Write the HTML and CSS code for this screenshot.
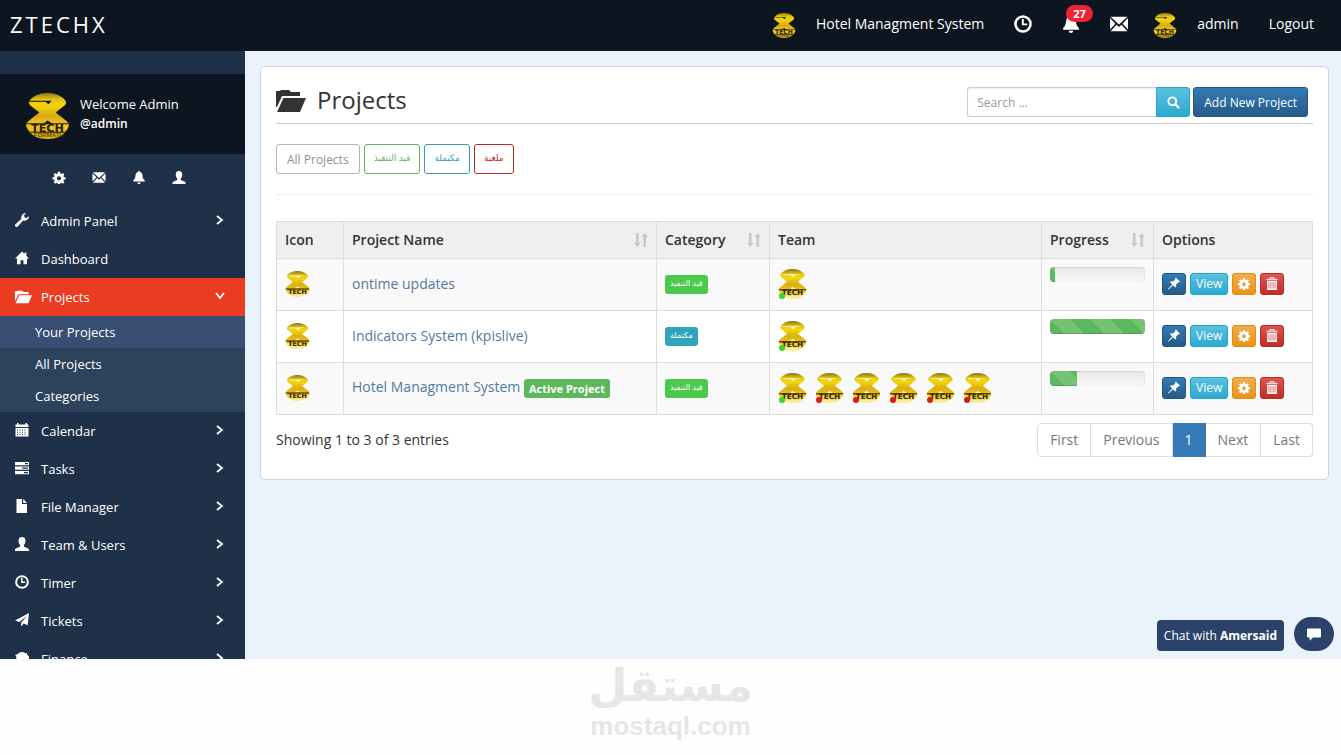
FILE: index.html
```html
<!DOCTYPE html>
<html lang="en">
<head>
  <meta charset="UTF-8">
  <meta name="viewport" content="width=device-width, initial-scale=1.0">
  <title>Projects - ZTECHX</title>
  <link rel="stylesheet" href="styles.css">
</head>
<body>
  <!-- icons -->
  <svg class="sprite" aria-hidden="true">
    <defs>
      <linearGradient id="gold" x1="0" y1="0" x2="0" y2="1">
        <stop offset="0" stop-color="#8d7a12"/>
        <stop offset=".14" stop-color="#e3c414"/>
        <stop offset=".28" stop-color="#f2d40a"/>
        <stop offset=".5" stop-color="#d9a916"/>
        <stop offset=".7" stop-color="#f0c81c"/>
        <stop offset="1" stop-color="#d8b018"/>
      </linearGradient>
      <linearGradient id="gold-light" x1="0" y1="0" x2="0" y2="1">
        <stop offset="0" stop-color="#85751b"/>
        <stop offset=".15" stop-color="#dcbc0c"/>
        <stop offset=".28" stop-color="#f4da06"/>
        <stop offset=".5" stop-color="#dcae14"/>
        <stop offset=".72" stop-color="#efc60e"/>
        <stop offset=".84" stop-color="#f3d650"/>
        <stop offset="1" stop-color="#fbe98e"/>
      </linearGradient>
      <clipPath id="glass"><path d="M3 8Q9 0 21 0T39 8Q40 10 38 12L29 19L39 27Q42 29 42 32Q37 45 21 45T0 32Q0 29 3 27L13 19L4 12Q2 10 3 8Z"/></clipPath>
    </defs>
    <symbol id="logo" viewBox="0 0 42 45">
      <g clip-path="url(#glass)">
        <path fill="url(#gold)" d="M0 0h42v45H0z"/>
        <path fill="#0d1520" d="M3 7.500h22l-3 3.500-3-2.500H3zM17 30l4-3 5 3z"/>
        <path fill="#1c1a10" d="M0 29.500h42v1H0zM0 38h42v1H0z"/>
      </g>
      <text x="21" y="38" class="logo-word" fill="#2c1d08">TECH</text>
      <text x="21" y="43.500" class="logo-sub" fill="#5d4a08">FORMATI</text>
    </symbol>
    <symbol id="logo-light" viewBox="0 0 42 45">
      <g clip-path="url(#glass)">
        <path fill="url(#gold-light)" d="M0 0h42v45H0z"/>
        <path fill="#fff9dc" d="M6 8h29l-10 1.500-3 3-4-3L6 9zM17 30l4-3 5 3z"/>
        <path fill="#2d220a" d="M0 30.500h42v1.500H0z"/>
        <path stroke="#fff3b8" stroke-width="1" d="M8 41h26M14 43h14"/>
      </g>
      <text x="21" y="39" class="logo-word" fill="#2d220a">TECH</text>
    </symbol>
    <symbol id="cog" viewBox="0 0 16 16">
      <path fill-rule="evenodd" d="M6.700 1h2.600l.4 2 1.300.6 1.800-1.200 1.800 1.800-1.200 1.800.6 1.300 2 .4v2.600l-2 .4-.6 1.300 1.200 1.800-1.800 1.800-1.800-1.200-1.300.6-.4 2H6.700l-.4-2-1.300-.6-1.800 1.200-1.800-1.800L2.600 12 2 10.700l-2-.4V7.700l2-.4L2.600 6 1.400 4.200l1.800-1.800L5 3.600 6.300 3zM8 6.400a2.600 2.600 0 1 0 0 5.200 2.600 2.600 0 0 0 0-5.200z"/>
    </symbol>
    <symbol id="mail" viewBox="0 0 16 16">
      <path d="M.5 1.500h15L8 8.500zM0 2.700l4.800 5L0 12.800zM16 2.700l-4.800 5 4.800 5.100zM.6 14.500l5.200-5.800L8 10.700l2.200-2 5.200 5.800z"/>
    </symbol>
    <symbol id="bell" viewBox="0 0 16 16">
      <path d="M8 0c.8 0 1.300.5 1.300 1.300C11.500 2 12.200 4 12.400 6c.2 2.600 1 4 2.600 5.500V13H1v-1.500C2.600 10 3.400 8.600 3.600 6c.2-2 .9-4 3.100-4.700C6.700.5 7.200 0 8 0zM6 14h4c-.2 1.300-1 2-2 2s-1.800-.7-2-2z"/>
    </symbol>
    <symbol id="user" viewBox="0 0 16 16">
      <path d="M8 0c2.600 0 4 1.700 4 4.200 0 2-.7 3.800-1.900 4.900v1.300c0 .5.300.8.800 1l3.600 1.500c1 .4 1.500 1 1.500 2V16H0v-1.100c0-1 .5-1.600 1.500-2l3.600-1.500c.5-.2.8-.5.8-1V9.100C4.700 8 4 6.200 4 4.200 4 1.700 5.400 0 8 0z"/>
    </symbol>
    <symbol id="clock" viewBox="0 0 16 16">
      <circle cx="8" cy="8" r="6.700" fill="none" stroke="currentColor" stroke-width="2.300"/>
      <path d="M7 3.500h1.700v4h3.100v1.700H7z"/>
    </symbol>
    <symbol id="wrench" viewBox="0 0 16 16">
      <path d="M15.700 3.300a4.700 4.700 0 0 1-6.200 5.200L3 15.300a1.700 1.700 0 0 1-2.500-2.400L7.400 6.500A4.700 4.700 0 0 1 12.700.3L10.400 2.700l.6 2.300 2.300.6z"/>
    </symbol>
    <symbol id="home" viewBox="0 0 16 16">
      <path d="M8 .5l3 3V1.800h2v3.700L16 8.700H13.700V15H9.700v-4.500H6.300V15H2.300V8.700H0z"/>
    </symbol>
    <symbol id="folder" viewBox="0 0 30 22">
      <path d="M0 1h4l1-1h8l2 2h9v4H6L1 17H0zM7.500 8H30L24 22H1z"/>
    </symbol>
    <symbol id="calendar" viewBox="0 0 14 14">
      <path d="M2 0h1.500v1.500h7V0H12v1.500h1.500V4H.5V1.500H2z"/>
      <path fill-rule="evenodd" d="M.5 5h13v8.500H.5zM2 6.500v1h1v-1zm2.500 0v1h1v-1zm2.500 0v1h1v-1zm2.500 0v1h1v-1zM2 8.800v1h1v-1zm2.500 0v1h1v-1zm2.500 0v1h1v-1zm2.500 0v1h1v-1zM2 11v1h1v-1zm2.500 0v1h1v-1zM7 11v1h1v-1zm2.500 0v1h1v-1z"/>
    </symbol>
    <symbol id="tasks" viewBox="0 0 14 14">
      <path fill-rule="evenodd" d="M0 1h14v3.300H0zm10 1v1.300h3V2zM0 5.500h14v3.300H0zm7 1v1.300h6V6.500zM0 10h14v3.300H0zm9 1v1.300h4V11z"/>
    </symbol>
    <symbol id="file" viewBox="0 0 14 14">
      <path d="M1.500 0H7v5h5v9H1.500zM8.200 0L12 3.900H8.200z"/>
    </symbol>
    <symbol id="plane" viewBox="0 0 16 16">
      <path d="M16 0l-1.500 14-4.500-2-3 3.500v-4.300L13.500 3.500 5 10.200 0 8.500z"/>
    </symbol>
    <symbol id="piggy" viewBox="0 0 16 16">
      <path d="M5 2q3-2 6 0l1 .8 2-.8-.3 2.200L16 6v4l-2.500 1.500L12 15h-2v-2H6v2H4l-1-3.500Q1 9 1.500 6L0 4.500 2 4z"/>
    </symbol>
    <symbol id="search" viewBox="0 0 16 16">
      <circle cx="6.500" cy="6.500" r="4.800" fill="none" stroke="currentColor" stroke-width="2.400"/>
      <path d="M9 11l2-2 4.500 4.300q.4 1.200-.7 2-1 .5-1.700-.2z"/>
    </symbol>
    <symbol id="pin" viewBox="0 0 16 16">
      <path d="M9.500.8l1-.8L16 5.500l-1 1-1.300-.2-2.900 2.900.2 2.800-1.300 1.300-3-3L.8 16 0 15.200l5.700-5.900-3-3L4 5l2.800.2 2.900-2.900z"/>
    </symbol>
    <symbol id="trash" viewBox="0 0 14 16">
      <path fill-rule="evenodd" d="M4.500 0h5l.6 2H14v1.500H0V2h3.900zm.9 1l-.3 1h3.800l-.3-1zM1 4.500h12V16H1zM2.800 6v8h.9V6zm2.500 0v8h.9V6zm2.500 0v8h.9V6zm2.500 0v8h.9V6z"/>
    </symbol>
    <symbol id="chat" viewBox="0 0 16 14">
      <path d="M1.200 0h13.600Q16 0 16 1.200v8Q16 10.500 14.800 10.500H7L3 14v-3.500H1.200Q0 10.500 0 9.200v-8Q0 0 1.200 0z"/>
    </symbol>
    <symbol id="sort" viewBox="0 0 14 14">
      <path d="M2 0h2.600v10h2L3.300 14 0 10h2zM9.400 14h2.600V4h2L10.700 0 7.400 4h2z"/>
    </symbol>
    <symbol id="chevron" viewBox="0 0 8 10">
      <path fill="none" stroke="currentColor" stroke-width="1.800" d="M1 1l5 4-5 4"/>
    </symbol>
  </svg>

  <div class="app">
    <header class="topbar">
      <a class="brand" href="#">ZTECHX</a>
      <nav class="topnav">
        <a class="with-logo" href="#"><svg class="logo-small"><use href="#logo"/></svg>Hotel Managment System</a>
        <a href="#" aria-label="Timer"><svg class="icon-top"><use href="#clock"/></svg></a>
        <a class="alerts" href="#" aria-label="Notifications"><svg class="icon-top"><use href="#bell"/></svg><span class="count">27</span></a>
        <a class="messages" href="#" aria-label="Messages"><svg class="icon-top"><use href="#mail"/></svg></a>
        <a class="with-logo" href="#"><svg class="logo-small"><use href="#logo"/></svg>admin</a>
        <a href="#">Logout</a>
      </nav>
    </header>

    <div class="body">
      <aside class="sidebar">
        <div class="profile">
          <svg class="logo-profile"><use href="#logo"/></svg>
          <div class="who">
            <div>Welcome Admin</div>
            <div class="handle">@admin</div>
          </div>
        </div>
        <div class="shortcuts">
          <a href="#" aria-label="Settings"><svg class="icon"><use href="#cog"/></svg></a>
          <a href="#" aria-label="Messages"><svg class="icon"><use href="#mail"/></svg></a>
          <a href="#" aria-label="Notifications"><svg class="icon"><use href="#bell"/></svg></a>
          <a href="#" aria-label="Profile"><svg class="icon"><use href="#user"/></svg></a>
        </div>
        <ul class="menu">
          <li><a href="#"><svg class="icon"><use href="#wrench"/></svg><span>Admin Panel</span><svg class="chevron"><use href="#chevron"/></svg></a></li>
          <li><a href="#"><svg class="icon"><use href="#home"/></svg><span>Dashboard</span></a></li>
          <li class="active">
            <a href="#"><svg class="icon icon-wide"><use href="#folder"/></svg><span>Projects</span><svg class="chevron"><use href="#chevron"/></svg></a>
            <ul class="submenu">
              <li class="current"><a href="#">Your Projects</a></li>
              <li><a href="#">All Projects</a></li>
              <li><a href="#">Categories</a></li>
            </ul>
          </li>
          <li><a href="#"><svg class="icon"><use href="#calendar"/></svg><span>Calendar</span><svg class="chevron"><use href="#chevron"/></svg></a></li>
          <li><a href="#"><svg class="icon"><use href="#tasks"/></svg><span>Tasks</span><svg class="chevron"><use href="#chevron"/></svg></a></li>
          <li><a href="#"><svg class="icon"><use href="#file"/></svg><span>File Manager</span><svg class="chevron"><use href="#chevron"/></svg></a></li>
          <li><a href="#"><svg class="icon"><use href="#user"/></svg><span>Team &amp; Users</span><svg class="chevron"><use href="#chevron"/></svg></a></li>
          <li><a href="#"><svg class="icon"><use href="#clock"/></svg><span>Timer</span><svg class="chevron"><use href="#chevron"/></svg></a></li>
          <li><a href="#"><svg class="icon"><use href="#plane"/></svg><span>Tickets</span><svg class="chevron"><use href="#chevron"/></svg></a></li>
          <li><a href="#"><svg class="icon"><use href="#piggy"/></svg><span>Finance</span><svg class="chevron"><use href="#chevron"/></svg></a></li>
        </ul>
      </aside>

      <main class="content">
        <section class="panel">
          <div class="panel-head">
            <h1><svg class="icon-title"><use href="#folder"/></svg>Projects</h1>
            <form class="search">
              <input type="text" placeholder="Search ..." aria-label="Search">
              <button type="button" class="btn-search" aria-label="Search"><svg class="icon"><use href="#search"/></svg></button>
              <button type="button" class="btn-add">Add New Project</button>
            </form>
          </div>

          <div class="filters">
            <button type="button" class="filter">All Projects</button>
            <button type="button" class="filter arabic green" lang="ar">قيد التنفيذ</button>
            <button type="button" class="filter arabic teal" lang="ar">مكتملة</button>
            <button type="button" class="filter arabic red" lang="ar">ملغية</button>
          </div>

          <table class="projects">
            <colgroup>
              <col class="col-icon"><col><col class="col-category"><col class="col-team"><col class="col-progress"><col class="col-options">
            </colgroup>
            <thead>
              <tr>
                <th>Icon</th>
                <th><div class="sortable">Project Name<svg class="sort"><use href="#sort"/></svg></div></th>
                <th><div class="sortable">Category<svg class="sort"><use href="#sort"/></svg></div></th>
                <th>Team</th>
                <th><div class="sortable">Progress<svg class="sort"><use href="#sort"/></svg></div></th>
                <th>Options</th>
              </tr>
            </thead>
            <tbody>
              <tr>
                <td><svg class="logo-row"><use href="#logo-light"/></svg></td>
                <td><a href="#">ontime updates</a></td>
                <td><span class="tag arabic green" lang="ar">قيد التنفيذ</span></td>
                <td>
                  <div class="team">
                    <span class="member online"><svg><use href="#logo-light"/></svg></span>
                  </div>
                </td>
                <td class="cell-progress"><div class="progress"><div class="bar" style="width: 5%"></div></div></td>
                <td>
                  <div class="options">
                    <button type="button" class="blue" aria-label="Pin"><svg class="icon"><use href="#pin"/></svg></button>
                    <button type="button" class="cyan">View</button>
                    <button type="button" class="orange" aria-label="Settings"><svg class="icon"><use href="#cog"/></svg></button>
                    <button type="button" class="crimson" aria-label="Delete"><svg class="icon"><use href="#trash"/></svg></button>
                  </div>
                </td>
              </tr>
              <tr>
                <td><svg class="logo-row"><use href="#logo-light"/></svg></td>
                <td><a href="#">Indicators System (kpislive)</a></td>
                <td><span class="tag arabic teal" lang="ar">مكتملة</span></td>
                <td>
                  <div class="team">
                    <span class="member online"><svg><use href="#logo-light"/></svg></span>
                  </div>
                </td>
                <td class="cell-progress"><div class="progress"><div class="bar" style="width: 100%"></div></div></td>
                <td>
                  <div class="options">
                    <button type="button" class="blue" aria-label="Pin"><svg class="icon"><use href="#pin"/></svg></button>
                    <button type="button" class="cyan">View</button>
                    <button type="button" class="orange" aria-label="Settings"><svg class="icon"><use href="#cog"/></svg></button>
                    <button type="button" class="crimson" aria-label="Delete"><svg class="icon"><use href="#trash"/></svg></button>
                  </div>
                </td>
              </tr>
              <tr>
                <td><svg class="logo-row"><use href="#logo-light"/></svg></td>
                <td><a href="#">Hotel Managment System</a> <span class="tag">Active Project</span></td>
                <td><span class="tag arabic green" lang="ar">قيد التنفيذ</span></td>
                <td>
                  <div class="team">
                    <span class="member online"><svg><use href="#logo-light"/></svg></span>
                    <span class="member"><svg><use href="#logo-light"/></svg></span>
                    <span class="member"><svg><use href="#logo-light"/></svg></span>
                    <span class="member"><svg><use href="#logo-light"/></svg></span>
                    <span class="member"><svg><use href="#logo-light"/></svg></span>
                    <span class="member"><svg><use href="#logo-light"/></svg></span>
                  </div>
                </td>
                <td class="cell-progress"><div class="progress"><div class="bar" style="width: 28%"></div></div></td>
                <td>
                  <div class="options">
                    <button type="button" class="blue" aria-label="Pin"><svg class="icon"><use href="#pin"/></svg></button>
                    <button type="button" class="cyan">View</button>
                    <button type="button" class="orange" aria-label="Settings"><svg class="icon"><use href="#cog"/></svg></button>
                    <button type="button" class="crimson" aria-label="Delete"><svg class="icon"><use href="#trash"/></svg></button>
                  </div>
                </td>
              </tr>
            </tbody>
          </table>

          <div class="table-foot">
            <div>Showing 1 to 3 of 3 entries</div>
            <ul class="pager">
              <li><a href="#">First</a></li>
              <li><a href="#">Previous</a></li>
              <li class="current"><a href="#">1</a></li>
              <li><a href="#">Next</a></li>
              <li><a href="#">Last</a></li>
            </ul>
          </div>
        </section>
      </main>
    </div>

    <div class="chat">
      <button type="button" class="chat-label">Chat with <b>Amersaid</b></button>
      <button type="button" class="chat-open" aria-label="Open chat"><svg><use href="#chat"/></svg></button>
    </div>
  </div>

  <footer class="watermark">
    <div class="mark-ar" lang="ar">مستقل</div>
    <div class="mark-en">mostaql.com</div>
  </footer>
</body>
</html>
```
FILE: styles.css
```css
* {
  box-sizing: border-box;
}
body {
  margin: 0;
  height: 100vh;
  display: flex;
  flex-direction: column;
  font-family: "Open Sans", "DejaVu Sans", sans-serif;
  font-size: 14px;
  line-height: 20px;
  color: #333;
  background: #fefefe;
}
a {
  color: inherit;
  text-decoration: none;
}
ul {
  list-style: none;
  margin: 0;
  padding: 0;
}
button, input {
  font-family: inherit;
}
svg {
  display: block;
  fill: currentColor;
  flex: none;
}
.sprite {
  position: absolute;
  width: 0;
  height: 0;
}
.logo-word {
  font: bold 11px "DejaVu Sans", sans-serif;
  text-anchor: middle;
}
.logo-sub {
  font: bold 6px "Liberation Sans", sans-serif;
  text-anchor: middle;
}
.icon {
  width: 13px;
  height: 13px;
}

/* top bar */
.app {
  position: relative;
  flex: 1;
  min-height: 0;
  display: flex;
  flex-direction: column;
  overflow: hidden;
}
.topbar {
  height: 51px;
  flex: none;
  display: flex;
  align-items: center;
  justify-content: space-between;
  padding: 0 12px 0 10px;
  background: #0d1520;
  color: #fff;
}
.brand {
  padding-bottom: 3px;
  font-size: 22px;
  letter-spacing: 3px;
}
.topnav {
  display: flex;
  align-items: center;
  padding-bottom: 4px;
}
.topnav a {
  display: flex;
  align-items: center;
  padding: 0 15px;
}
.topnav .messages {
  padding-right: 10px;
}
.topnav .with-logo {
  gap: 20px;
}
.icon-top {
  width: 18px;
  height: 18px;
}
.logo-small {
  width: 24px;
  height: 25px;
  margin-top: 4px;
}
.alerts {
  position: relative;
}
.count {
  position: absolute;
  left: 19px;
  top: -10px;
  padding: 0 7px;
  border-radius: 9px;
  background: #ee2436;
  font-size: 11px;
  line-height: 17px;
  font-weight: bold;
}

/* sidebar */
.body {
  flex: 1;
  min-height: 0;
  display: flex;
}
.sidebar {
  width: 245px;
  flex: none;
  padding-top: 23px;
  overflow: hidden;
  background: #1f3148;
  color: #fff;
  font-size: 13px;
}
.profile {
  height: 80px;
  display: flex;
  align-items: center;
  gap: 11px;
  padding: 4px 26px 0;
  background: #0d1520;
}
.logo-profile {
  width: 43px;
  height: 46px;
}
.who {
  padding-bottom: 5px;
}
.handle {
  font-size: 12px;
  font-weight: 600;
}
.shortcuts {
  display: flex;
  align-items: center;
  height: 48px;
  padding: 0 0 2px 52px;
  gap: 26px;
}
.shortcuts .icon {
  width: 14px;
}
.menu a {
  display: flex;
  align-items: center;
  height: 38px;
  padding: 0 21px 0 15px;
}
.menu span {
  flex: 1;
}
.menu .icon {
  width: 14px;
  height: 14px;
  margin: 0 12px 2px 0;
}
.menu .icon-wide {
  width: 17px;
  margin: 0 9px 0 0;
}
.chevron {
  width: 8px;
  height: 10px;
  margin-bottom: 3px;
}
.active > a {
  background: #e93c20;
}
.active > a .chevron {
  transform: rotate(90deg);
}
.submenu {
  background: #2d435c;
}
.submenu a {
  height: 32px;
  padding-left: 35px;
}
.submenu .current {
  background: #394e73;
}

/* content */
.content {
  flex: 1;
  min-width: 0;
  padding: 15px 12px 15px 15px;
  background: #eaf3fb;
}
.panel {
  padding: 20px 15px 22px;
  background: #fff;
  border: 1px solid #cdd6e2;
  border-radius: 5px;
}
.panel-head {
  display: flex;
  justify-content: space-between;
  align-items: flex-start;
  padding: 0 5px 6px 0;
  border-bottom: 1px solid #ccc;
}
h1 {
  display: flex;
  align-items: center;
  gap: 11px;
  margin: 0;
  font-size: 24px;
  font-weight: normal;
  line-height: 20px;
}
.icon-title {
  width: 30px;
  height: 22px;
  margin-top: 3px;
}
.search {
  display: flex;
}
.search input {
  width: 189px;
  height: 30px;
  padding: 1px 9px;
  border: 1px solid #ccc;
  border-right: 0;
  border-radius: 3px 0 0 3px;
  font-size: 12px;
  box-shadow: inset 0 1px 1px rgba(0, 0, 0, .08);
}
.search input::placeholder {
  color: #999;
}
.search button {
  height: 30px;
  color: #fff;
  font-size: 12px;
}
.btn-search {
  width: 34px;
  padding: 0 10px;
  border: 1px solid #28a4c9;
  border-radius: 0 3px 3px 0;
  background: linear-gradient(#5bc0de, #2aabd2);
}
.btn-add {
  margin-left: 3px;
  padding: 0 10px;
  border: 1px solid #245580;
  border-radius: 3px;
  background: linear-gradient(#337ab7, #265a88);
}
.filters {
  display: flex;
  gap: 4px;
  padding: 20px 0;
  border-bottom: 1px solid #eee;
}
.filter {
  height: 30px;
  padding: 0 10px;
  border: 1px solid #b3b3b3;
  border-radius: 3px;
  background: #fff;
  color: #8f8f8f;
  font-size: 12px;
}
.filter.arabic {
  padding: 0 9px 4px;
  font-size: 9px;
}
.filter.green {
  border-color: #5cb85c;
  color: #5cb85c;
}
.filter.teal {
  border-color: #3a9cb0;
  color: #3a9cb0;
}
.filter.red {
  border-color: #b52b27;
  color: #b52b27;
}

/* projects table */
.projects {
  width: 100%;
  margin-top: 26px;
  table-layout: fixed;
  border-collapse: collapse;
}
.col-icon {
  width: 67px;
}
.col-category {
  width: 113px;
}
.col-team {
  width: 272px;
}
.col-progress {
  width: 112px;
}
.col-options {
  width: 159px;
}
.projects th, .projects td {
  padding: 0 8px;
  border: 1px solid #ddd;
  text-align: left;
}
.projects th {
  height: 37px;
  background: #efefef;
  font-weight: 600;
}
.projects td {
  height: 52px;
  padding-bottom: 2px;
}
.projects tbody tr:nth-child(odd) {
  background: #f9f9f9;
}
.projects td > a {
  color: #517a9f;
}
.sortable {
  display: flex;
  align-items: center;
  justify-content: space-between;
}
.sort {
  width: 14px;
  height: 14px;
  color: #c8c8c8;
}
.logo-row {
  width: 25px;
  height: 26px;
}
.tag {
  display: inline-block;
  height: 19px;
  padding: 0 5px;
  border-radius: 3px;
  background: #5cb85c;
  color: #fff;
  font-size: 11px;
  font-weight: bold;
  line-height: 19px;
  vertical-align: middle;
}
.tag.arabic {
  font-size: 8px;
  font-weight: normal;
  line-height: 16px;
}
.tag.green {
  background: #4ac94a;
}
.tag.teal {
  background: #2fa4bb;
}
.team {
  display: flex;
  gap: 8px;
}
.member {
  position: relative;
}
.member svg {
  width: 29px;
  height: 30px;
}
.member::after {
  content: "";
  position: absolute;
  left: 1px;
  bottom: 0;
  width: 6px;
  height: 6px;
  border-radius: 50%;
  background: #d91a1a;
}
.member.online::after {
  background: #35d52f;
}
.projects .cell-progress {
  padding-top: 8px;
  vertical-align: top;
}
.progress {
  height: 15px;
  overflow: hidden;
  border-radius: 4px;
  background: linear-gradient(#ebebeb, #f5f5f5);
  box-shadow: inset 0 1px 2px rgba(0, 0, 0, .12);
}
.bar {
  height: 100%;
  background: linear-gradient(45deg, rgba(255, 255, 255, .15) 25%, transparent 25%, transparent 50%, rgba(255, 255, 255, .15) 50%, rgba(255, 255, 255, .15) 75%, transparent 75%) 0 0 / 40px 40px #5cb85c;
  box-shadow: inset 0 -1px 0 rgba(0, 0, 0, .15);
}
.options {
  display: flex;
  gap: 4px;
}
.options button {
  height: 22px;
  padding: 0 5px;
  border: 1px solid;
  border-radius: 3px;
  color: #fff;
  font-size: 12px;
  line-height: 18px;
}
.options .icon {
  width: 12px;
}
.options .blue {
  border-color: #245580;
  background: linear-gradient(#337ab7, #265a88);
}
.options .cyan {
  border-color: #28a4c9;
  background: linear-gradient(#5bc0de, #2aabd2);
}
.options .orange {
  border-color: #e38d13;
  background: linear-gradient(#f0ad4e, #eb9316);
}
.options .crimson {
  border-color: #b92c28;
  background: linear-gradient(#d9534f, #c12e2a);
}
.table-foot {
  display: flex;
  justify-content: space-between;
  align-items: center;
  margin-top: 8px;
}
.pager {
  display: flex;
}
.pager li {
  border: 1px solid #ddd;
  border-left: 0;
  color: #777;
}
.pager li:first-child {
  border-left: 1px solid #ddd;
  border-radius: 4px 0 0 4px;
}
.pager li:last-child {
  border-radius: 0 4px 4px 0;
}
.pager a {
  display: block;
  padding: 6px 12px;
}
.pager .current {
  border-color: #337ab7;
  background: #337ab7;
  color: #fff;
}

/* chat widget */
.chat {
  position: absolute;
  right: 7px;
  bottom: 8px;
  display: flex;
  align-items: flex-end;
  gap: 10px;
}
.chat button {
  border: 0;
  background: #2b436a;
  color: #fff;
}
.chat-label {
  height: 31px;
  padding: 0 7px;
  border-radius: 4px;
  font-size: 12px;
}
.chat-open {
  width: 40px;
  height: 34px;
  padding: 0 13px;
  border-radius: 17px;
}
.chat-open svg {
  width: 14px;
  height: 13px;
}

.watermark {
  flex: none;
  height: 96px;
  text-align: center;
  color: #e6e6e6;
  font-weight: bold;
}
.mark-ar {
  font-family: "DejaVu Sans", sans-serif;
  font-size: 45px;
  line-height: 54px;
}
.mark-en {
  font-family: "Liberation Sans", sans-serif;
  font-size: 26px;
  line-height: 26px;
}
```
